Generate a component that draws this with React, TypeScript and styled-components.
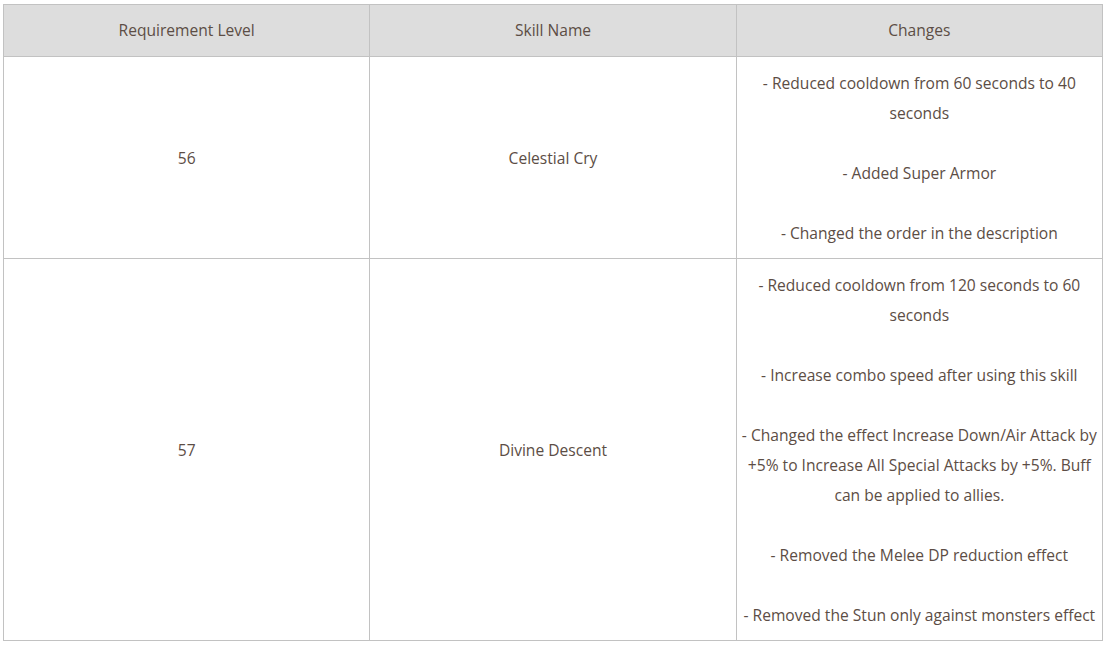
import React from 'react';
import styled, { createGlobalStyle } from 'styled-components';

const GlobalStyle = createGlobalStyle`
  html, body {
    margin: 0;
    padding: 0;
    background: #ffffff;
  }
`;

const Page = styled.div`
  padding: 4px 4px 0 3px;
`;

const Table = styled.table`
  width: 1100px;
  border-collapse: collapse;
  table-layout: fixed;
  font-family: 'Open Sans', 'Liberation Sans', sans-serif;
  font-size: 15.6px;
  line-height: 30px;
  color: #5c4d45;
`;

const HeadCell = styled.th`
  background: #dddddd;
  border: 1px solid #c2c2c2;
  font-weight: normal;
  text-align: center;
  padding: 10px 0 11px;
`;

const Cell = styled.td`
  border: 1px solid #c2c2c2;
  text-align: center;
  vertical-align: middle;
  padding: 11px 0 10px;
`;

const Change = styled.p`
  margin: 0;

  & + & {
    margin-top: 30px;
  }
`;

type Row = { level: string; skill: string; changes: string[] };

const rows: Row[] = [
  {
    level: '56',
    skill: 'Celestial Cry',
    changes: [
      '- Reduced cooldown from 60 seconds to 40 seconds',
      '- Added Super Armor',
      '- Changed the order in the description',
    ],
  },
  {
    level: '57',
    skill: 'Divine Descent',
    changes: [
      '- Reduced cooldown from 120 seconds to 60 seconds',
      '- Increase combo speed after using this skill',
      '- Changed the effect Increase Down/Air Attack by +5% to Increase All Special Attacks by +5%. Buff can be applied to allies.',
      '- Removed the Melee DP reduction effect',
      '- Removed the Stun only against monsters effect',
    ],
  },
];

export default function App() {
  return (
    <Page>
      <GlobalStyle />
      <Table>
        <thead>
          <tr>
            <HeadCell>Requirement Level</HeadCell>
            <HeadCell>Skill Name</HeadCell>
            <HeadCell>Changes</HeadCell>
          </tr>
        </thead>
        <tbody>
          {rows.map(row => (
            <tr key={row.level}>
              <Cell>{row.level}</Cell>
              <Cell>{row.skill}</Cell>
              <Cell>
                {row.changes.map(c => (
                  <Change key={c}>{c}</Change>
                ))}
              </Cell>
            </tr>
          ))}
        </tbody>
      </Table>
    </Page>
  );
}
